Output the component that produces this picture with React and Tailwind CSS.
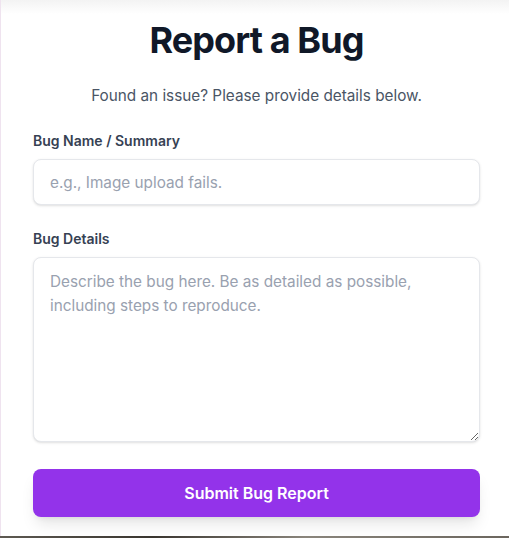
import React from "react";

export default function App() {
  return (
    <div className="relative w-[509px] h-[538px] overflow-hidden bg-white" style={{ fontFamily: "Inter, 'Noto Sans', sans-serif" }}>
      <div className="w-[512px] h-[536px] border-l border-[#efe3ef] bg-[linear-gradient(to_bottom,#f3f3f3,#ffffff_14px)] px-8 pt-[17px]">
        <h1 className="text-center text-4xl font-bold tracking-tight text-gray-900 leading-[46px]">Report a Bug</h1>
        <p className="mt-[21px] text-center text-[15.3px] text-gray-600 leading-6">Found an issue? Please provide details below.</p>
        <form className="mt-[23px] flex flex-col" onSubmit={(e) => e.preventDefault()}>
          <label className="block text-sm font-semibold text-gray-700 leading-5 mb-2">Bug Name / Summary</label>
          <input
            type="text"
            placeholder="e.g., Image upload fails."
            className="w-full h-[46px] rounded-lg border border-gray-200 bg-white px-4 text-[15.3px] text-gray-900 placeholder-gray-400 shadow-sm outline-none"
          />
          <label className="block mt-6 text-sm font-semibold text-gray-700 leading-5 mb-2">Bug Details</label>
          <textarea
            placeholder="Describe the bug here. Be as detailed as possible, including steps to reproduce."
            className="w-full h-[185px] rounded-lg border border-gray-200 bg-white px-4 py-3 text-[15.3px] leading-6 text-gray-900 placeholder-gray-400 shadow-sm outline-none"
          />
          <button
            type="submit"
            className="mt-[27px] h-[48px] w-full rounded-lg bg-[#9333ea] text-base font-semibold text-white shadow-lg"
          >
            Submit Bug Report
          </button>
        </form>
      </div>
      <div className="h-[2px] bg-[linear-gradient(to_right,#5e5a52,#3a3630_30%,#8a857c_60%,#6b665e)]" />
    </div>
  );
}
